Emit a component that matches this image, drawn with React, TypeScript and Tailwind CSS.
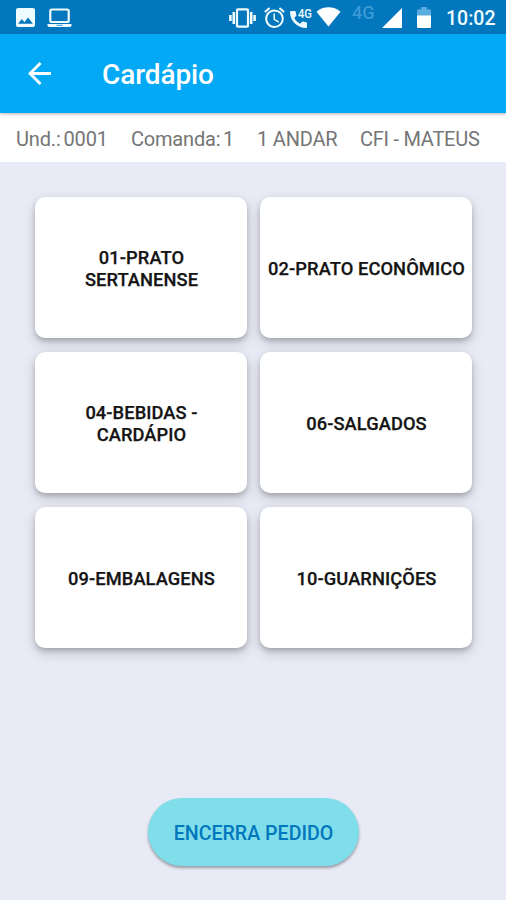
interface TextRun {
  label: string;
  className: string;
}

const orderInfo: TextRun[] = [
  { label: "Und.: 0001", className: "ml-4 w-[115px] tracking-[-0.15px] [word-spacing:-2px]" },
  { label: "Comanda: 1", className: "w-[126px] tracking-[-0.2px] [word-spacing:-2px]" },
  { label: "1 ANDAR", className: "w-[103px] tracking-[-0.2px]" },
  { label: "CFI - MATEUS", className: "tracking-[-0.25px]" },
];

const categories = [
  "01-PRATO SERTANENSE",
  "02-PRATO ECONÔMICO",
  "04-BEBIDAS - CARDÁPIO",
  "06-SALGADOS",
  "09-EMBALAGENS",
  "10-GUARNIÇÕES",
];

export default function App() {
  return (
    <div className="flex h-[900px] w-[506px] flex-col overflow-hidden bg-[#e8eaf6] font-[Roboto,sans-serif]">
      <StatusBar />

      <header className="z-10 flex h-[79px] shrink-0 items-center bg-[#03a9f4] shadow-[0_1px_3px_rgba(0,0,0,0.3)]">
        <button type="button" aria-label="Voltar" className="ml-[28px]">
          <svg viewBox="4 4 16 16" className="h-[23px] w-[23px] fill-white" aria-hidden="true">
            <path d="M20 11H7.83l5.59-5.59L12 4l-8 8 8 8 1.41-1.41L7.83 13H20v-2z" />
          </svg>
        </button>
        <h1 className="ml-[51px] mt-[3px] text-[28px] font-medium leading-none tracking-[-0.1px] text-white">
          Cardápio
        </h1>
      </header>

      <div className="flex h-[49px] shrink-0 items-center whitespace-nowrap bg-white pt-[3px] text-[20px] leading-6 text-[#757575]">
        {orderInfo.map((item) => (
          <span key={item.label} className={item.className}>
            {item.label}
          </span>
        ))}
      </div>

      <main className="flex flex-1 flex-col items-center">
        <div className="mt-[35px] grid w-[437px] grid-cols-2 gap-x-[13px] gap-y-[14px]">
          {categories.map((name) => (
            <CategoryCard key={name} name={name} />
          ))}
        </div>

        <button
          type="button"
          className="mb-[34px] ml-px mt-auto h-[68px] w-[211px] rounded-full bg-[#80deea] pt-[3px] text-[19.6px] font-medium text-[#0277bd] shadow-[0_2px_3px_rgba(0,0,0,0.35)]"
        >
          ENCERRA PEDIDO
        </button>
      </main>
    </div>
  );
}

function CategoryCard({ name }: { name: string }) {
  return (
    <button
      type="button"
      className="flex h-[141px] items-center justify-center rounded-[10px] bg-white pl-[2px] shadow-[0_3px_5px_rgba(0,0,0,0.18),0_5px_13px_rgba(0,0,0,0.16)]"
    >
      <span className="max-w-[200px] pt-[2px] text-center text-[18.3px] font-medium leading-[21.5px] tracking-[0.08px] text-[#141414] [-webkit-text-stroke:0.25px_#141414]">
        {name}
      </span>
    </button>
  );
}

function StatusBar() {
  return (
    <div className="flex h-[34px] shrink-0 items-center bg-[#0277bd] text-[#eefcff]">
      <svg viewBox="3 3 18 18" className="ml-[16px] mt-px h-[19px] w-[19px] fill-current" aria-hidden="true">
        <path d="M21 19V5c0-1.1-.9-2-2-2H5c-1.1 0-2 .9-2 2v14c0 1.1.9 2 2 2h14c1.1 0 2-.9 2-2zM8.500 13.500l2.500 3.010L14.500 12l4.500 6H5l3.500-4.500z" />
      </svg>

      {/* laptop */}
      <svg viewBox="0 0 25 20" className="ml-[12px] mt-px h-[20px] w-[25px]" fill="none" aria-hidden="true">
        <rect x="3.3" y="1.5" width="18.4" height="12.5" rx="1.5" stroke="currentColor" strokeWidth="2.2" />
        <path d="M0.5 16h24v1.2q0 1.8-1.8 1.8H2.3Q.5 19 .5 17.2z" fill="currentColor" />
        <path d="M9.5 17.3h6" stroke="#0277bd" strokeWidth="0.8" />
      </svg>

      {/* vibrate */}
      <svg viewBox="0 0 27 20" className="ml-[157px] mt-px h-[20px] w-[27px]" fill="none" stroke="currentColor" strokeWidth="2.2" aria-hidden="true">
        <rect x="8" y="1.3" width="11" height="17.4" rx="1" />
        <path d="M4.8 4v12M1.4 7v6M22.2 4v12M25.6 7v6" strokeWidth="2.6" />
      </svg>

      {/* alarm */}
      <svg viewBox="2 1.7 20 20.3" className="ml-[8px] mt-px h-[21px] w-[21px] fill-current" aria-hidden="true">
        <path d="M22 5.72l-4.6-3.86-1.29 1.53 4.6 3.86L22 5.72zM7.88 3.39L6.6 1.86 2 5.71l1.29 1.53 4.59-3.85zM12.5 8H11v6l4.75 2.85.75-1.23-4-2.37V8zM12 4c-4.97 0-9 4.03-9 9s4.02 9 9 9a9 9 0 0 0 0-18zm0 16c-3.87 0-7-3.13-7-7s3.13-7 7-7 7 3.13 7 7-3.13 7-7 7z" />
      </svg>

      {/* phone call over 4G */}
      <div className="relative ml-[5px] h-[20px] w-[23px]">
        <svg viewBox="0 0 17 17" className="mt-[4px] h-[17px] w-[17px] fill-current" aria-hidden="true">
          <path d="M1 0h3.800q.9 0 1 .9.100 1.600.6 3 .2.700-.3 1.200L4.200 7.100q1.900 3.800 5.700 5.700l2-1.900q.5-.5 1.200-.3 1.400.5 3 .6.900.100.9 1V16q0 1-1 1Q9.400 17 4.700 12.300 0 7.600 0 1 0 0 1 0z" />
        </svg>
        <span className="absolute left-[8px] top-px origin-left scale-x-[0.86] text-[13px] font-medium leading-[12px]">4G</span>
      </div>

      {/* wifi */}
      <svg viewBox="0 0 25 20" className="ml-[3px] h-[20px] w-[25px] fill-white" aria-hidden="true">
        <path d="M0.5 4.7C3.8 1.6 8 0.3 12.5 0.3s8.7 1.3 12 4.4L12.5 19.6z" />
      </svg>

      <span className="mb-[8px] ml-[11px] w-[23px] text-[18px] font-medium leading-none text-[#3b9ad4]">4G</span>

      {/* mobile signal */}
      <svg viewBox="0 0 20 20" className="ml-[7px] mt-[2px] h-[20px] w-[20px] fill-white" aria-hidden="true">
        <path d="M20 0v20H0z" />
      </svg>

      {/* battery */}
      <svg viewBox="0 0 14 21" className="ml-[15px] mt-px h-[21px] w-[14px]" aria-hidden="true">
        <path d="M4 0h6v2.2h2.7q1.3 0 1.3 1.3V9H0V3.500q0-1.300 1.300-1.300H4z" fill="#58abdf" />
        <path d="M0 8.500h14v11q0 1.500-1.500 1.500h-11Q0 21 0 19.500z" fill="white" />
      </svg>

      <span className="ml-[15px] mt-[4px] text-[19.5px] font-medium leading-none">10:02</span>
    </div>
  );
}
